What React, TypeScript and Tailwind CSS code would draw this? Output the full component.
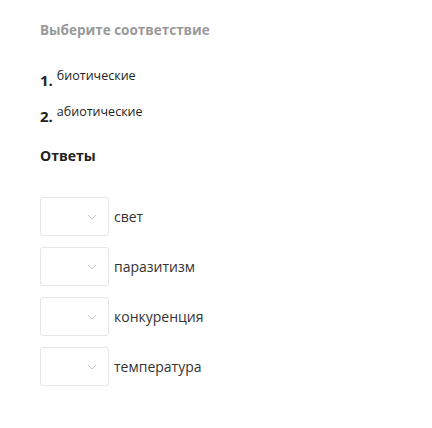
import React from 'react';

const items = ['биотические', 'абиотические'];
const answers = ['свет', 'паразитизм', 'конкуренция', 'температура'];

const Chevron = () => (
    <svg width="10" height="6" viewBox="0 0 10 6" fill="none">
        <path d="M1 1l4 4 4-4" stroke="#c8c8c8" strokeWidth="1" />
    </svg>
);

const App = () => {
    return (
        <div className="min-h-screen bg-white pl-10 pt-[21px] text-[#222]" style={{ fontFamily: '"Open Sans", sans-serif' }}>
            <h1 className="text-[13.5px] font-bold leading-[19px] text-[#999]">Выберите соответствие</h1>

            <div className="mt-[29px] flex flex-col gap-[16px]">
                {items.map((t, i) => (
                    <div key={t} className="flex items-start">
                        <span className="text-[15px] font-bold leading-[18px] mt-[2px]">{i + 1}.</span>
                        <span className="ml-[4px] text-[12.5px] leading-[14px]">{t}</span>
                    </div>
                ))}
            </div>

            <h2 className="mt-[21px] text-[14px] font-bold leading-[19px]">Ответы</h2>

            <div className="mt-[32px] flex flex-col gap-[11px]">
                {answers.map((a) => (
                    <div key={a} className="flex items-center">
                        <div className="flex h-[39px] w-[69px] items-center justify-end rounded-[3px] border border-[#e6e6e6] pr-[11px]">
                            <Chevron />
                        </div>
                        <span className="ml-[5px] text-[14px] text-[#333]">{a}</span>
                    </div>
                ))}
            </div>
        </div>
    );
};

export default App;
